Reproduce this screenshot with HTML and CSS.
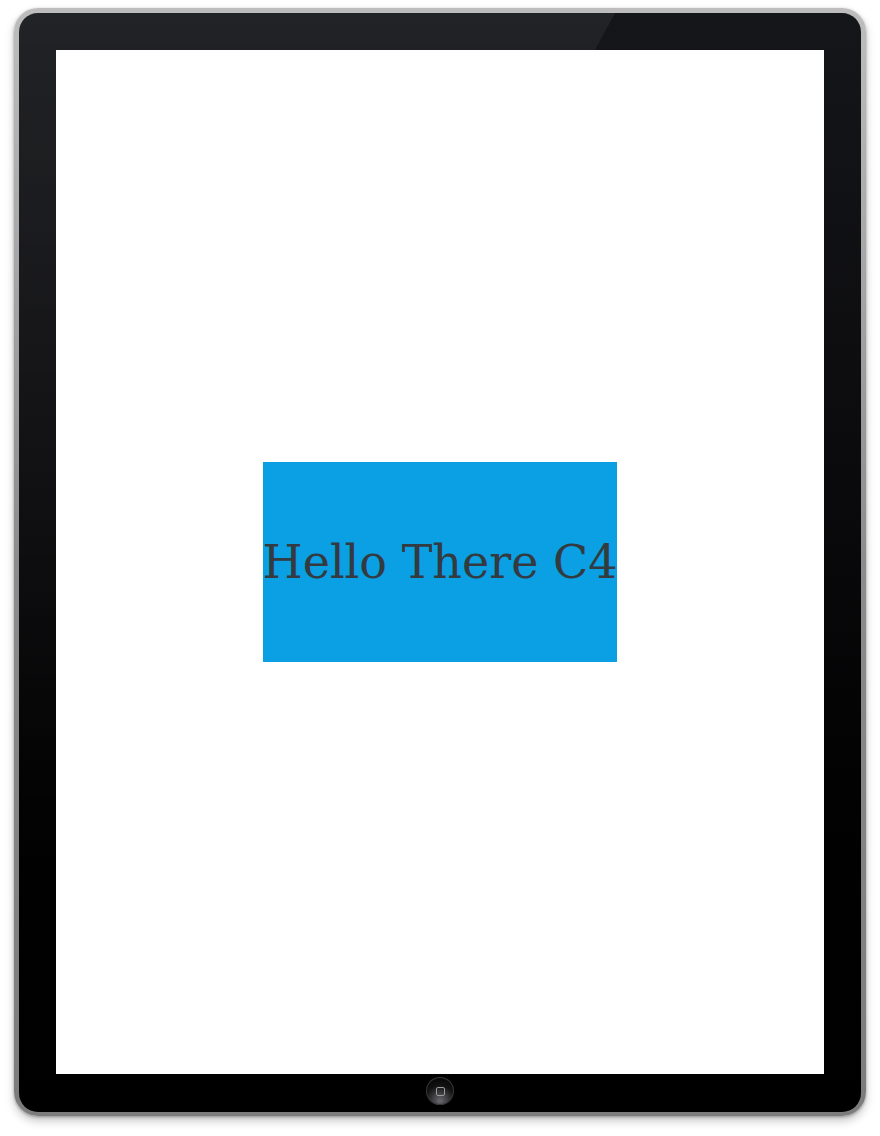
FILE: index.html
```html
<!DOCTYPE html>
<html>
<head>
<meta charset="utf-8">
<link rel="stylesheet" href="styles.css">
</head>
<body>
<div class="device">
  <div class="bezel">
    <div class="glare"></div>
    <div class="screen">
      <div class="box"><span class="label">Hello There C4</span></div>
    </div>
    <div class="home"><div class="home-sq"></div></div>
  </div>
</div>
</body>
</html>
```
FILE: styles.css
```css
html, body {
  margin: 0;
  padding: 0;
  background: #ffffff;
  width: 880px;
  height: 1136px;
  overflow: hidden;
}
.device {
  margin: 8px 0 0 14px;
  width: 852px;
  height: 1108px;
  box-sizing: border-box;
  border-radius: 24px;
  background: linear-gradient(#bdbdbd, #8c8c8c 50%, #7c7c7c);
  padding: 5px 5px 4px 5px;
  box-shadow: 0 5px 10px rgba(0,0,0,0.22), 0 1px 3px rgba(0,0,0,0.3);
}
.bezel {
  position: relative;
  height: 100%;
  border-radius: 19px;
  background: linear-gradient(to bottom, #15161a 0%, #0b0b0d 40%, #020203 70%, #000 100%);
  padding: 37px 37px 0 37px;
  box-sizing: border-box;
  display: flex;
  flex-direction: column;
  align-items: center;
  overflow: hidden;
}
.glare {
  position: absolute;
  top: 0;
  left: 0;
  width: 100%;
  height: 100%;
  background: linear-gradient(to bottom, rgba(255,255,255,0.06) 0%, rgba(255,255,255,0.04) 30%, rgba(255,255,255,0.0) 85%);
  clip-path: polygon(0 0, 596px 0, 0 1100px);
  filter: blur(0.6px);
  pointer-events: none;
}
.screen {
  position: relative;
  width: 768px;
  height: 1024px;
  background: #ffffff;
  display: flex;
  align-items: center;
  justify-content: center;
  flex-shrink: 0;
}
.box {
  width: 354px;
  height: 200px;
  background: #0b9fe3;
  display: flex;
  align-items: center;
  justify-content: center;
  overflow: visible;
}
.label {
  font-family: "DejaVu Serif", serif;
  font-size: 46px;
  color: #333a40;
  white-space: nowrap;
  line-height: 1;
}
.home {
  margin-top: 3px;
  width: 28px;
  height: 28px;
  border-radius: 50%;
  background: radial-gradient(circle at 50% 85%, #6a6a6e 0%, #3a3a3d 30%, #121213 55%, #0a0a0a 75%);
  box-shadow: inset 0 0 0 1px #353537;
  display: flex;
  align-items: center;
  justify-content: center;
}
.home-sq {
  width: 7px;
  height: 7px;
  border: 1px solid #9a9a9a;
  border-radius: 2px;
}
```
